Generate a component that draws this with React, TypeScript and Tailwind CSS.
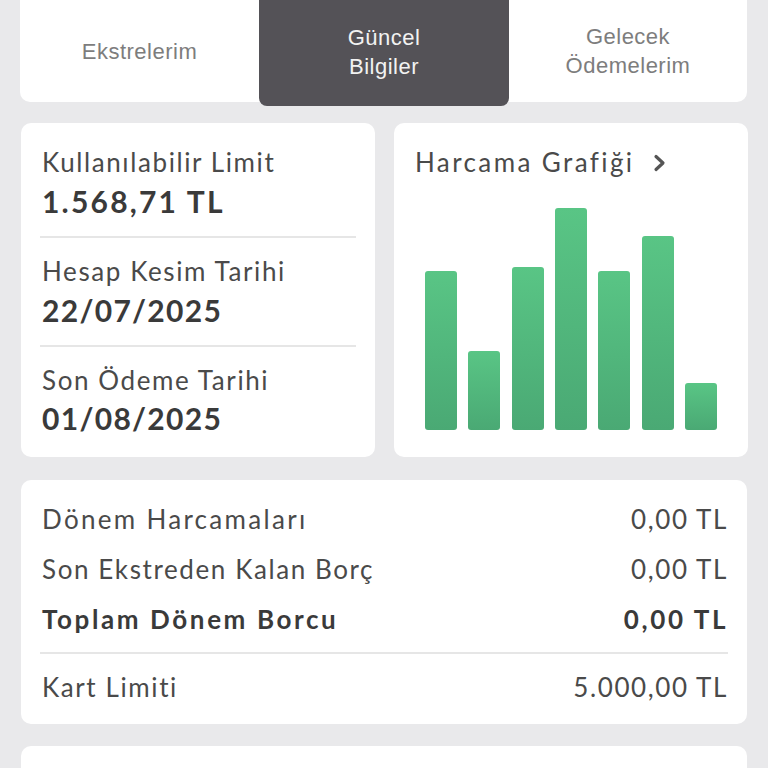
import React from "react";

const bars = [159, 79, 163, 222, 159, 194, 47];

function Label({ children, className = "tracking-[1.6px]" }: { children: React.ReactNode; className?: string }) {
  return <div className={"text-[26px] leading-[32px] text-[#4a4a4a] " + className}>{children}</div>;
}
function Value({ children, className = "tracking-[1.3px]" }: { children: React.ReactNode; className?: string }) {
  return <div className={"text-[30px] leading-[36px] font-bold text-[#3a3a3a] " + className}>{children}</div>;
}

export default function App() {
  return (
    <div
      className="w-[768px] h-[768px] overflow-hidden bg-[#e9e9eb] px-[20px]"
      style={{ fontFamily: "Lato, 'Noto Sans', sans-serif" }}
    >
      {/* Tabs */}
      <div className="flex items-start h-[102px] bg-white rounded-b-[10px] mr-[1px]">
        <div
          className="w-[239px] h-[102px] flex items-center justify-center text-[22px] leading-[29px] tracking-[0.5px] text-[#7d7d7d]"
          style={{ fontFamily: "'Liberation Sans', Arial, sans-serif" }}
        >
          Ekstrelerim
        </div>
        <div
          className="w-[250px] h-[106px] bg-[#545257] rounded-b-[8px] flex items-center justify-center text-center text-[22px] leading-[29px] tracking-[0.5px] text-[#f2f2f2]"
          style={{ fontFamily: "'Liberation Sans', Arial, sans-serif" }}
        >
          <div className="-mt-[3px]">
            Güncel
            <br />
            Bilgiler
          </div>
        </div>
        <div
          className="flex-1 h-[102px] flex items-center justify-center text-center text-[22px] leading-[29px] tracking-[0.5px] text-[#7d7d7d]"
          style={{ fontFamily: "'Liberation Sans', Arial, sans-serif" }}
        >
          <div>
            Gelecek
            <br />
            Ödemelerim
          </div>
        </div>
      </div>

      {/* Two cards */}
      <div className="grid grid-cols-[354px_354px] gap-[19px] mt-[21px] ml-[1px]">
        <div className="bg-white rounded-[10px] h-[334px] flex flex-col px-[19px]">
          <div className="pt-[23px] pb-[17px] pl-[2px]">
            <Label>Kullanılabilir Limit</Label>
            <div className="mt-[5px]">
              <Value className="tracking-[2.2px]">1.568,71 TL</Value>
            </div>
          </div>
          <div className="h-[2px] bg-[#e6e6e6]" />
          <div className="pt-[17px] pb-[17px] pl-[2px]">
            <Label>Hesap Kesim Tarihi</Label>
            <div className="mt-[5px]">
              <Value>22/07/2025</Value>
            </div>
          </div>
          <div className="h-[2px] bg-[#e6e6e6]" />
          <div className="pt-[17px] pl-[2px]">
            <Label>Son Ödeme Tarihi</Label>
            <div className="mt-[4px]">
              <Value>01/08/2025</Value>
            </div>
          </div>
        </div>

        <div className="bg-white rounded-[10px] h-[334px] flex flex-col">
          <div className="flex items-center pt-[23px] pl-[21px] h-[55px]">
            <Label className="tracking-[2.4px]">Harcama Grafiği</Label>
            <svg className="ml-[18px] mt-[1px]" width="13" height="18" viewBox="0 0 13 18">
              <path d="M3 2.5 L10 9 L3 15.5" fill="none" stroke="#555" strokeWidth="3.2" strokeLinecap="round" strokeLinejoin="round" />
            </svg>
          </div>
          <div className="flex-1 flex items-end justify-between px-[31px] pb-[27px]">
            {bars.map((h, i) => (
              <div
                key={i}
                className="w-[32px] rounded-[3px] bg-gradient-to-b from-[#59c585] to-[#4aa974]"
                style={{ height: h }}
              />
            ))}
          </div>
        </div>
      </div>

      {/* Summary card */}
      <div className="bg-white rounded-[10px] mt-[23px] ml-[1px] mr-[1px] px-[19px] pt-[23px] pb-[21px]">
        <div className="flex justify-between pl-[2px] text-[26px] leading-[32px] tracking-[1.6px] text-[#4a4a4a]">
          <span className="tracking-[2.3px]">Dönem Harcamaları</span>
          <span>0,00 TL</span>
        </div>
        <div className="flex justify-between pl-[2px] mt-[18px] text-[26px] leading-[32px] tracking-[1.6px] text-[#4a4a4a]">
          <span>Son Ekstreden Kalan Borç</span>
          <span>0,00 TL</span>
        </div>
        <div className="flex justify-between pl-[2px] mt-[18px] text-[26px] leading-[32px] tracking-[2.6px] font-bold text-[#3a3a3a]">
          <span>Toplam Dönem Borcu</span>
          <span>0,00 TL</span>
        </div>
        <div className="h-[2px] bg-[#e6e6e6] mt-[17px]" />
        <div className="flex justify-between pl-[2px] mt-[17px] text-[26px] leading-[32px] tracking-[1.6px] text-[#4a4a4a]">
          <span>Kart Limiti</span>
          <span>5.000,00 TL</span>
        </div>
      </div>

      <div className="bg-white rounded-[10px] mt-[22px] ml-[1px] mr-[1px] h-[100px]" />
    </div>
  );
}
